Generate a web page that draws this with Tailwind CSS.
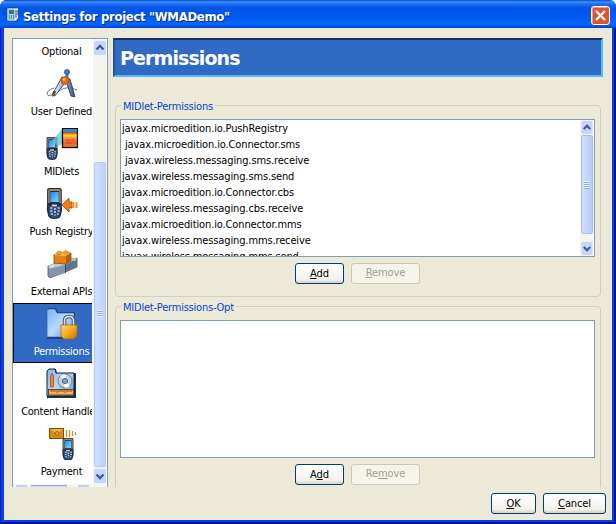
<!DOCTYPE html>
<html lang="en">
<head>
<meta charset="utf-8">
<title>Settings for project "WMADemo"</title>
<script src="https://cdn.jsdelivr.net/npm/@tailwindcss/browser@4"></script>
</head>
<body class="w-[616px] h-[524px] overflow-hidden bg-white text-black text-[11px] leading-4 tracking-[-0.130px] font-['DejaVu_Sans_Condensed','DejaVu_Sans',sans-serif] [font-stretch:condensed]">
<svg class="absolute w-0 h-0">
  <defs>
    <linearGradient id="steel" x1="0" x2="1"><stop offset="0" stop-color="#eef6ff"/><stop offset=".5" stop-color="#8fb4dc"/><stop offset="1" stop-color="#35557f"/></linearGradient>
    <linearGradient id="folder" x1="0" y1="0" x2="1" y2="1"><stop offset="0" stop-color="#7db4f4"/><stop offset=".5" stop-color="#b6d9fc"/><stop offset="1" stop-color="#5d9be8"/></linearGradient>
    <linearGradient id="gold" x1="0" y1="0" x2="1" y2="1"><stop offset="0" stop-color="#ffd56a"/><stop offset=".5" stop-color="#f9aa1c"/><stop offset="1" stop-color="#c36d04"/></linearGradient>
    <linearGradient id="screen" x1="0" y1="0" x2="1" y2="1"><stop offset="0" stop-color="#1e86ef"/><stop offset="1" stop-color="#7bdcff"/></linearGradient>
    <linearGradient id="rainbow" x1="0" y1="0" x2="0" y2="1"><stop offset="0" stop-color="#1d9be5"/><stop offset=".12" stop-color="#29b9bb"/><stop offset=".22" stop-color="#e53b24"/><stop offset=".36" stop-color="#f0e72b"/><stop offset=".5" stop-color="#f59a2b"/><stop offset=".75" stop-color="#ef5b25"/><stop offset="1" stop-color="#f28c2e"/></linearGradient>
    <g id="phone">
      <path d="M2 2Q2 0 4 0H14Q16 0 16 2V15Q17 22 15 28Q14 31 9 31Q4 31 3 28Q1 22 2 15Z" fill="#1c2b48"/>
      <path d="M3 3Q3 1 5 1H13Q15 1 15 3V15H3Z" fill="#b8824a"/>
      <rect x="4.500" y="3" width="9" height="12" fill="#0b2d68"/>
      <rect x="5" y="4" width="8" height="10" fill="url(#screen)"/>
      <path d="M3 17Q9 20 15 17L14 27Q13 30 9 30Q5 30 4 27Z" fill="#344b78"/>
      <path d="M5 20h2m1.500 1h2m1.500-1h2M5 23h2m1.500 1h2m1.500-1h2M5.500 26h2m1.500 1h1m1.500-1h1.500" stroke="#c8dcf8" stroke-width="1.500"/>
      <path d="M6.500 17.500h5" stroke="#e2c89b" stroke-width="2"/>
    </g>
    <symbol id="up" viewBox="0 0 12 14"><rect width="12" height="14" rx="1.500" fill="#c5d5fd"/><path d="M2.500 8.500L6 5L9.500 8.500" fill="none" stroke="#435b8d" stroke-width="2.300"/></symbol>
    <symbol id="down" viewBox="0 0 12 14"><rect width="12" height="14" rx="1.500" fill="#c5d5fd"/><path d="M2.500 5.500L6 9L9.500 5.500" fill="none" stroke="#435b8d" stroke-width="2.300"/></symbol>
  </defs>
</svg>
<div class="relative w-[616px] h-[524px] rounded-t-[7px] overflow-hidden flex flex-col bg-[#0842dd] shadow-[inset_-2px_-2px_0_#00139c,inset_1px_0_0_#0019cf]">
  <header class="h-7 shrink-0 flex items-center pl-[6px] pr-[6px] bg-[linear-gradient(#0a46c4_0,#3c92ff_2px,#1c70f5_4px,#0055e5_8px,#0058ee_16px,#0267ff_24px,#0459ea_26px,#003dd0_28px)]">
    <svg class="w-[14px] h-4 mt-[2px]" viewBox="0 0 14 16"><path d="M1 1H12.500V12H11V14H1Z" fill="#e8f6fb" stroke="#123c6e" stroke-width=".7"/><rect x="2" y="2" width="7" height="11" fill="#a9d3dc"/><path d="M3 3h5v4H3Z" fill="#287b98"/><path d="M3 9h1m1 0h1m1 0h1M3 11h1m1 0h1m1 0h1M10 3v8M12 3v5" stroke="#1c4d73"/></svg>
    <h1 class="ml-[3px] mt-[5px] flex-1 whitespace-nowrap text-white text-[13px] font-bold tracking-[-0.330px] [text-shadow:1px_1px_0_#0a2a85]">Settings for project "WMADemo"</h1>
    <svg class="w-[19px] h-[19px] mt-[3px]" viewBox="0 0 19 19"><rect x=".5" y=".5" width="18" height="18" rx="2.500" fill="#e0532c" stroke="#fff"/><path d="M1.500 17V3Q1.500 1.500 3 1.500H16" fill="none" stroke="#f0a184"/><path d="M5 5L14 14M14 5L5 14" stroke="#fff" stroke-width="2.300"/></svg>
  </header>
  <main class="ml-1 mr-1 mb-1 flex-1 min-h-0 flex flex-col bg-[#ece9d8]">
    <div class="flex h-[459px] pt-[10px] pl-2 overflow-hidden shrink-0">
      <nav class="w-24 h-[449px] shrink-0 flex border border-b-0 border-[#7f9db9] bg-white overflow-hidden">
        <div class="w-[79px] shrink-0 flex flex-col overflow-hidden">
          <ul class="w-[97px] h-[445px] shrink-0 text-center whitespace-nowrap tracking-[-0.250px]">
            <li class="h-[24px] pt-[5px]">Optional</li>
            <li class="h-[60px] pt-[5px]"><svg class="w-8 h-8 mx-auto mb-[4px]" viewBox="0 0 32 32"><path d="M8 20Q1 22 1 26Q2 29 8 26L13 23Q21 17 31 22" fill="none" stroke="#777" stroke-width="1"/><path d="M16 9L6 27L9 28L21 12ZM19 10L25 28L29 29L24 11Z" fill="url(#steel)" stroke="#25364f" stroke-width=".8"/><path d="M7 23L10 23L9 27L6 29Z" fill="#6b4f20"/><rect x="19.500" y="5" width="3" height="7" fill="#3b86d7"/><circle cx="21" cy="4" r="2.600" fill="#347fd7" stroke="#143a76" stroke-width=".6"/><circle cx="19" cy="12.500" r="4" fill="#ed6a0a" stroke="#8d3403" stroke-width=".6"/><circle cx="18" cy="11.500" r="1.300" fill="#ffc078"/></svg><div>User Defined</div></li>
            <li class="h-[60px] pt-[5px]"><svg class="w-8 h-8 mx-auto mb-[4px]" viewBox="0 0 32 32"><use href="#phone" transform="translate(-1 9) scale(.78 .74)"/><path d="M6 13L16 1V16L12 18Z" fill="#57c8e2" opacity=".75"/><rect x="16.500" y=".5" width="15" height="19" fill="url(#rainbow)" stroke="#111" stroke-width="1.300"/><path d="M20 12h4m1 0h3M20 15h6" stroke="#c43a68" stroke-width="1.200"/><path d="M18 3h12" stroke="#2d72df"/></svg><div>MIDlets</div></li>
            <li class="h-[60px] pt-[5px]"><svg class="w-8 h-8 mx-auto mb-[4px]" viewBox="0 0 32 32"><use href="#phone" transform="translate(-1 0) scale(1.050 1)"/><path d="M16 17L23 10V14H26V20H23V24Z" fill="#f47e13" stroke="#a83d02" stroke-width=".8"/><path d="M27.500 14v6M30.500 14v6" stroke="#f28a26" stroke-width="1.800"/></svg><div>Push Registry</div></li>
            <li class="h-[60px] pt-[5px]"><svg class="w-8 h-8 mx-auto mb-[4px]" viewBox="0 0 32 32"><path d="M2 18L15 13L31 10L31 19L19 24L4 30L2 28Z" fill="#8798aa" stroke="#435365" stroke-width=".8"/><path d="M2 18L15 13L31 10L19 17L4 21Z" fill="#bcc9d5"/><path d="M4 21V30L19 25V17Z" fill="#8395a7"/><path d="M20 17V24L31 19V11Z" fill="#607489"/><path d="M19.500 16V25" stroke="#35475a"/><path d="M8 7L13 4L25 5V13L20 16L8 15Z" fill="#e28412" stroke="#8a4704" stroke-width=".8"/><path d="M8 7L13 4L25 5L20 8Z" fill="#ffc35a"/><path d="M20 8L25 5V13L20 16Z" fill="#b45c07"/><ellipse cx="13" cy="5" rx="2.300" ry="1.800" fill="#f8aa2c" stroke="#a45b07" stroke-width=".5"/><ellipse cx="20" cy="4.500" rx="2.300" ry="1.800" fill="#f8aa2c" stroke="#a45b07" stroke-width=".5"/><ellipse cx="6" cy="18" rx="2.500" ry="1.400" fill="#d5dee7"/><ellipse cx="28" cy="11.500" rx="2.200" ry="1.400" fill="#b4c4d2"/></svg><div>External APIs</div></li>
            <li class="h-[60px] pt-1 border border-black bg-[#316ac5] text-white"><svg class="w-8 h-8 mx-auto mb-[4px]" viewBox="0 0 32 32"><path d="M1 2L3 0H10L12 4H29V31H1Z" fill="#20406f"/><path d="M1 2L3 1H9L11 5H28V29H1Z" fill="url(#folder)" stroke="#315f9d" stroke-width=".7"/><path d="M18.500 19V13Q18.500 8.500 23 8.500Q27.500 8.500 27.500 13V19" fill="none" stroke="#4c5863" stroke-width="3.500"/><path d="M18.500 19V13Q18.500 8.500 23 8.500Q27.500 8.500 27.500 13V19" fill="none" stroke="#dce3e8" stroke-width="1.500"/><path d="M15 17H31V28L28 31H18L15 28Z" fill="url(#gold)" stroke="#a96505" stroke-width=".7"/></svg><div>Permissions</div></li>
            <li class="h-[60px] pt-[5px]"><svg class="w-8 h-8 mx-auto mb-[4px]" viewBox="0 0 32 32"><path d="M1 3L3 1H10L11 5H30V30H1Z" fill="#1c3557"/><path d="M1 3L3 1H9L10 5H28V28H1Z" fill="url(#folder)" stroke="#111e30"/><path d="M4.500 8L6 5L7.500 8V19H4.500Z" fill="#f18517" stroke="#8e3907" stroke-width=".6"/><circle cx="19" cy="13" r="7" fill="#c4d3d9" stroke="#556a78" stroke-width=".8"/><path d="M19 13L14 8Q17 5 20 7ZM19 13L24 18Q21 21 18 19Z" fill="#f4faff"/><circle cx="19" cy="13" r="2.500" fill="#7da9d4" stroke="#41617a"/><rect x="2.500" y="21.500" width="25" height="5.500" fill="#f0b467" stroke="#7b3e0a"/><path d="M5 22v2m2-2v2m2-2v2m2-2v3m2-3v2m2-2v2m2-2v2m2-2v3m2-3v2m2-2v2m2-2v2" stroke="#6e370a" stroke-width=".8"/></svg><div class="pr-[3px]">Content Handler</div></li>
            <li class="h-[60px] pt-[5px]"><svg class="w-8 h-8 mx-auto mb-[4px]" viewBox="0 0 32 32"><rect x="3.500" y=".5" width="14" height="10" fill="#d88c18" stroke="#8a4c05"/><path d="M4 1L11 6L17 1" fill="#eeb141"/><circle cx="11" cy="5.500" r="2" fill="#e69c20" stroke="#94560b" stroke-width=".7"/><path d="M20.500 2v7M23.500 2v7M26.500 3v5M29.500 4v3" stroke="#c79331" stroke-width="1.300"/><use href="#phone" transform="translate(15 10) scale(.78 .72)"/></svg><div>Payment</div></li>
          </ul>
          <div class="h-[3px] shrink-0 flex gap-1 px-[3px] pt-[1px] bg-[#f5f5ef]"><div class="w-[11px] bg-[#bdcffa]"></div><div class="w-[36px] bg-[#c5d5fd] border-t border-[#91abe0]"></div><div class="ml-auto w-[11px] bg-[#bdcffa]"></div></div>
        </div>
        <div class="w-[15px] shrink-0 flex flex-col items-center bg-[#f5f5ef] border-x border-white">
          <svg class="w-3 h-[14px] mt-[2px] shrink-0"><use href="#up"/></svg>
          <div class="mt-[107px] w-3 h-[305px] shrink-0 rounded-[2px] border border-[#b5c8f5] bg-[linear-gradient(90deg,#d0dffe,#bfd1fc)] flex items-center justify-center"><div class="w-[6px] h-[7px] -mt-[3px] bg-[repeating-linear-gradient(#eef4ff_0_1px,#8cb0f8_1px_2px)]"></div></div>
          <svg class="w-3 h-[14px] mt-[2px] shrink-0"><use href="#down"/></svg>
        </div>
      </nav>
      <section class="ml-[5px] w-[492px] shrink-0">
        <h2 class="w-[490px] h-[39px] flex items-center pl-[5px] bg-[#316ac5] border-2 border-t-[#17315c] border-l-[#244f95] border-r-[#55b8ff] border-b-[#55b8ff] text-white text-[19px] font-bold tracking-[-0.900px] font-['DejaVu_Sans',sans-serif] [font-stretch:normal]">Permissions</h2>
        <div class="relative mt-[28px] ml-[2px] w-[486px] h-[192px] border border-[#d0d0bf] rounded-[4px] pt-[13px] pl-[4px]">
          <div class="absolute left-[5px] -top-[7px] px-[2px] bg-[#ece9d8] text-[#0046d5] whitespace-nowrap tracking-[-0.220px]">MIDlet-Permissions</div>
          <div class="w-[475px] h-[138px] border border-[#7f9db9] bg-white flex overflow-hidden">
            <ul class="flex-1 pl-[1px] pt-px whitespace-nowrap leading-4">
              <li>javax.microedition.io.PushRegistry</li>
              <li class="pl-[3px]">javax.microedition.io.Connector.sms</li>
              <li class="pl-[3px]">javax.wireless.messaging.sms.receive</li>
              <li>javax.wireless.messaging.sms.send</li>
              <li>javax.microedition.io.Connector.cbs</li>
              <li>javax.wireless.messaging.cbs.receive</li>
              <li>javax.microedition.io.Connector.mms</li>
              <li>javax.wireless.messaging.mms.receive</li>
              <li>javax.wireless.messaging.mms.send</li>
            </ul>
            <div class="w-[15px] shrink-0 flex flex-col items-center bg-[#f5f5ef] border-x border-white">
              <svg class="w-3 h-[13px] mt-[1px] shrink-0"><use href="#up"/></svg>
              <div class="mt-[1px] w-3 h-[99px] shrink-0 rounded-[2px] border border-[#a8bef3] bg-[linear-gradient(90deg,#d0dffe,#bacdfb)] flex items-center justify-center"><div class="w-[6px] h-[8px] bg-[repeating-linear-gradient(#eef4ff_0_1px,#8cb0f8_1px_2px)]"></div></div>
              <svg class="w-3 h-[13px] mt-[8px] shrink-0"><use href="#down"/></svg>
            </div>
          </div>
          <div class="flex gap-[7px] mt-[6px] ml-[175px]">
            <button class="w-[49px] h-[21px] border border-[#003c74] rounded-[3px] bg-[linear-gradient(#fff,#f3f2ec_80%,#d8d0c4)] leading-[17px]"><u>A</u>dd</button>
            <button disabled class="w-[69px] h-[21px] border border-[#c9c7ba] rounded-[3px] bg-[#f5f4ea] text-[#a1a192] leading-[17px] pb-[2px]"><u>R</u>emove</button>
          </div>
        </div>
        <div class="relative mt-[9px] ml-[2px] w-[486px] h-[192px] border border-[#d0d0bf] rounded-[4px] pt-[13px] pl-[4px]">
          <div class="absolute left-[5px] -top-[7px] px-[2px] bg-[#ece9d8] text-[#0046d5] whitespace-nowrap tracking-[-0.220px]">MIDlet-Permissions-Opt</div>
          <div class="w-[475px] h-[138px] border border-[#7f9db9] bg-white"></div>
          <div class="flex gap-[7px] mt-[6px] ml-[175px]">
            <button class="w-[49px] h-[21px] border border-[#003c74] rounded-[3px] bg-[linear-gradient(#fff,#f3f2ec_80%,#d8d0c4)] leading-[17px]">A<u>d</u>d</button>
            <button disabled class="w-[69px] h-[21px] border border-[#c9c7ba] rounded-[3px] bg-[#f5f4ea] text-[#a1a192] leading-[17px] pb-[2px]">Re<u>m</u>ove</button>
          </div>
        </div>
      </section>
    </div>
    <footer class="flex justify-end gap-[7px] pr-[6px] pt-[6px]">
      <button class="w-[45px] h-[21px] border border-[#003c74] rounded-[3px] bg-[linear-gradient(#fff,#f3f2ec_80%,#d8d0c4)] leading-[17px]"><u>O</u>K</button>
      <button class="w-[63px] h-[21px] border border-[#003c74] rounded-[3px] bg-[linear-gradient(#fff,#f3f2ec_80%,#d8d0c4)] leading-[17px]"><u>C</u>ancel</button>
    </footer>
  </main>
</div>
</body>
</html>
